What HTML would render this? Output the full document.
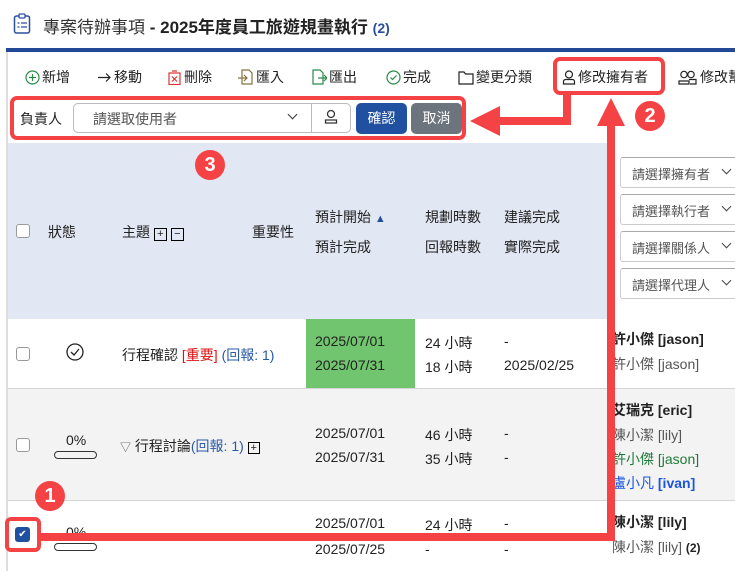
<!DOCTYPE html>
<html><head><meta charset="utf-8"><style>
*{box-sizing:border-box;margin:0;padding:0}
body{width:735px;height:571px;overflow:hidden;background:#fff;font-family:"Liberation Sans","Noto Sans CJK TC",sans-serif;font-size:14px;color:#222;position:relative}
.a{position:absolute;white-space:nowrap}
.cb{position:absolute;width:14px;height:14px;border:1px solid #999;border-radius:3px;background:#fff}
.sel{position:absolute;left:620px;width:125px;height:31px;border:1px solid #ccc;border-top-color:#aaa;border-radius:3px;background:#fff;font-size:13px;color:#555;padding:6px 0 0 11px}
.sel:after{content:"";position:absolute;right:14px;top:8px;width:6px;height:6px;border-right:1.5px solid #444;border-bottom:1.5px solid #444;transform:rotate(45deg)}
.bar{position:absolute;width:43px;height:8px;border:1px solid #333;border-radius:4px}
.red{background:#f54245}
.circ{position:absolute;width:30px;height:30px;border-radius:50%;background:#f54245;color:#fff;font-weight:bold;font-size:20px;text-align:center;line-height:30px}
.tb{top:67px;font-size:14px}
.tb svg{vertical-align:-3px;margin-right:2px}
</style></head><body>
<svg class="a" style="left:13px;top:13px" width="18" height="22" viewBox="0 0 18 22"><rect x="1.5" y="3" width="15" height="17" rx="2" fill="none" stroke="#2a4f9c" stroke-width="1.5"/><rect x="6" y="1" width="6" height="4" rx="1" fill="#fff" stroke="#2a4f9c" stroke-width="1.3"/><path d="M4.5 10h2M8 10h6M4.5 14h2M8 14h6" stroke="#2a4f9c" stroke-width="1.3"/></svg>
<div class="a" style="left:43px;top:13px;font-size:17px;color:#333">專案待辦事項 <b style="color:#222">- 2025年度員工旅遊規畫執行</b> <b style="font-size:14px;color:#2a4f9c">(2)</b></div>
<div class="a" style="left:6px;top:48px;width:729px;height:4px;background:#234a97"></div>
<div class="a" style="left:6px;top:52px;width:2px;height:519px;background:#ddd"></div>
<div class="a tb" style="left:25px"><svg width="15" height="15"><circle cx="7.5" cy="7.5" r="6.5" fill="none" stroke="#2a8a4a" stroke-width="1.2"/><path d="M7.5 4v7M4 7.5h7" stroke="#2a8a4a" stroke-width="1.2"/></svg>新增</div>
<div class="a tb" style="left:97px"><svg width="15" height="15"><path d="M1 7.5h12M9 3.5l4 4-4 4" fill="none" stroke="#222" stroke-width="1.2"/></svg>移動</div>
<div class="a tb" style="left:167px"><svg width="15" height="15"><rect x="2" y="3" width="11" height="11.5" fill="none" stroke="#d33" stroke-width="1.2"/><path d="M5 1h5M5 6.5l5 5M10 6.5l-5 5" stroke="#d33" stroke-width="1.2"/></svg>刪除</div>
<div class="a tb" style="left:238px"><svg width="16" height="16"><path d="M4 1h7l3 3v11H4z" fill="none" stroke="#8a7040" stroke-width="1.2"/><path d="M0 9h9M6 6l3 3-3 3" fill="none" stroke="#8a7040" stroke-width="1.2"/></svg>匯入</div>
<div class="a tb" style="left:311px"><svg width="16" height="16"><path d="M2 1h7l3 3v11H2z" fill="none" stroke="#2a8a4a" stroke-width="1.2"/><path d="M7 9h9M13 6l3 3-3 3" fill="none" stroke="#2a8a4a" stroke-width="1.2"/></svg>匯出</div>
<div class="a tb" style="left:386px"><svg width="15" height="15"><circle cx="7.5" cy="7.5" r="6.5" fill="none" stroke="#2a8a4a" stroke-width="1.2"/><path d="M4.5 7.5l2 2 4-4" fill="none" stroke="#2a8a4a" stroke-width="1.2"/></svg>完成</div>
<div class="a tb" style="left:458px"><svg width="16" height="15"><path d="M1 2h5l1.5 2H15v10H1z" fill="none" stroke="#222" stroke-width="1.2"/></svg>變更分類</div>
<div class="a tb" style="left:562px"><svg width="14" height="15"><circle cx="7" cy="4.5" r="3.5" fill="none" stroke="#222" stroke-width="1.2"/><path d="M1.5 14v-2.5a2 2 0 0 1 2-2h7a2 2 0 0 1 2 2V14z" fill="none" stroke="#222" stroke-width="1.2"/></svg>修改擁有者</div>
<div class="a tb" style="left:678px"><svg width="20" height="15"><circle cx="6" cy="4.5" r="3.2" fill="none" stroke="#222" stroke-width="1.2"/><circle cx="13" cy="4.5" r="3.2" fill="none" stroke="#222" stroke-width="1.2"/><path d="M1 14v-3h10v3zM11 9.5h7V14h-6" fill="none" stroke="#222" stroke-width="1.2"/></svg>修改幫</div>
<div class="a" style="left:553px;top:57px;width:112px;height:38px;border:4px solid #f54245;border-radius:7px"></div>
<div class="a" style="left:8px;top:143px;width:602px;height:176px;background:#e1e7f3"></div>
<div class="a" style="left:8px;top:388px;width:727px;height:113px;background:#f3f3f3;border-top:1px solid #d5d5d5;border-bottom:1px solid #d5d5d5"></div>
<div class="a" style="left:306px;top:319px;width:109px;height:69px;background:#71c56e"></div>
<div class="a" style="left:10px;top:96px;width:456px;height:44px;border:4px solid #f54245;border-radius:7px"></div>
<div class="a" style="left:20px;top:109px">負責人</div>
<div class="a" style="left:73px;top:103px;width:278px;height:30px;border:1px solid #bbb;border-radius:5px;background:#fff"></div>
<div class="a" style="left:311px;top:103px;width:1px;height:30px;background:#bbb"></div>
<div class="a" style="left:93px;top:109px;color:#555">請選取使用者</div>
<div class="a" style="left:289px;top:111px;width:7px;height:7px;border-right:1.5px solid #333;border-bottom:1.5px solid #333;transform:rotate(45deg)"></div>
<svg class="a" style="left:324px;top:109px" width="14" height="16"><circle cx="7" cy="5" r="3.5" fill="none" stroke="#333" stroke-width="1.3"/><path d="M1.5 14v-3h11v3z" fill="none" stroke="#333" stroke-width="1.3"/></svg>
<div class="a" style="left:356px;top:103px;width:51px;height:31px;background:#2150a0;border-radius:5px;color:#fff;text-align:center;line-height:31px">確認</div>
<div class="a" style="left:411px;top:103px;width:51px;height:31px;background:#6c757d;border-radius:5px;color:#fff;text-align:center;line-height:31px">取消</div>
<div class="cb" style="left:16px;top:224px"></div>
<div class="a" style="left:48px;top:222px">狀態</div>
<div class="a" style="left:122px;top:222px">主題 <span style="display:inline-block;width:13px;height:13px;border:1px solid #000;font-size:11px;line-height:11px;text-align:center">+</span> <span style="display:inline-block;width:13px;height:13px;border:1px solid #000;font-size:11px;line-height:10px;text-align:center">−</span></div>
<div class="a" style="left:252px;top:222px">重要性</div>
<div class="a" style="left:315px;top:207px">預計開始 <span style="color:#2150a0;font-size:11px">▲</span></div>
<div class="a" style="left:315px;top:237px">預計完成</div>
<div class="a" style="left:425px;top:207px">規劃時數</div>
<div class="a" style="left:425px;top:237px">回報時數</div>
<div class="a" style="left:504px;top:207px">建議完成</div>
<div class="a" style="left:504px;top:237px">實際完成</div>
<div class="sel" style="top:157px">請選擇擁有者</div>
<div class="sel" style="top:194px">請選擇執行者</div>
<div class="sel" style="top:231px">請選擇關係人</div>
<div class="sel" style="top:268px">請選擇代理人</div>
<div class="cb" style="left:16px;top:347px"></div>
<svg class="a" style="left:66px;top:343px" width="18" height="18"><circle cx="9" cy="9" r="8" fill="none" stroke="#222" stroke-width="1.3"/><path d="M5 9l3 3 5-6" fill="none" stroke="#222" stroke-width="1.3"/></svg>
<div class="a" style="left:122px;top:345px">行程確認 <span style="color:#e01010">[重要]</span> <b style="color:#2a5aa8;font-weight:normal">(回報: 1)</b></div>
<div class="a" style="left:315px;top:333px">2025/07/01</div>
<div class="a" style="left:315px;top:357px">2025/07/31</div>
<div class="a" style="left:425px;top:333px">24 小時</div>
<div class="a" style="left:425px;top:357px">18 小時</div>
<div class="a" style="left:504px;top:333px">-</div>
<div class="a" style="left:504px;top:357px">2025/02/25</div>
<div class="a" style="left:612px;top:329px"><b>許小傑 [jason]</b></div>
<div class="a" style="left:612px;top:354px;color:#555">許小傑 [jason]</div>
<div class="cb" style="left:16px;top:438px"></div>
<div class="a" style="left:66px;top:432px">0%</div>
<div class="bar" style="left:54px;top:451px"></div>
<div class="a" style="left:120px;top:436px"><span style="font-size:11px;color:#555">▽</span> 行程討論<span style="color:#2a5aa8">(回報: 1)</span> <span style="display:inline-block;width:12px;height:12px;border:1px solid #000;font-size:11px;line-height:10px;text-align:center">+</span></div>
<div class="a" style="left:315px;top:425px">2025/07/01</div>
<div class="a" style="left:315px;top:449px">2025/07/31</div>
<div class="a" style="left:425px;top:425px">46 小時</div>
<div class="a" style="left:425px;top:449px">35 小時</div>
<div class="a" style="left:504px;top:425px">-</div>
<div class="a" style="left:504px;top:449px">-</div>
<div class="a" style="left:612px;top:400px"><b>艾瑞克 [eric]</b></div>
<div class="a" style="left:612px;top:425px;color:#555">陳小潔 [lily]</div>
<div class="a" style="left:612px;top:449px;color:#1f7a3a">許小傑 [jason]</div>
<div class="a" style="left:612px;top:473px;color:#1a55e0">盧小凡 <b>[ivan]</b></div>
<div class="a" style="left:66px;top:524px">0%</div>
<div class="bar" style="left:54px;top:543px"></div>
<div class="a" style="left:315px;top:515px">2025/07/01</div>
<div class="a" style="left:315px;top:541px">2025/07/25</div>
<div class="a" style="left:425px;top:515px">24 小時</div>
<div class="a" style="left:425px;top:541px">-</div>
<div class="a" style="left:504px;top:515px">-</div>
<div class="a" style="left:504px;top:541px">-</div>
<div class="a" style="left:612px;top:512px"><b>陳小潔 [lily]</b></div>
<div class="a" style="left:612px;top:537px;color:#555">陳小潔 [lily] <b style="color:#222;font-size:12px">(2)</b></div>
<div class="a red" style="left:35px;top:533px;width:580px;height:8px"></div>
<div class="a red" style="left:607px;top:122px;width:8px;height:419px"></div>
<svg class="a" style="left:596px;top:98px" width="30" height="28"><path d="M15 0L29 28H1z" fill="#f54245"/></svg>
<div class="a red" style="left:563px;top:93px;width:8px;height:32px"></div>
<div class="a red" style="left:495px;top:117px;width:76px;height:8px"></div>
<svg class="a" style="left:470px;top:106px" width="30" height="30"><path d="M0 15L30 0V30z" fill="#f54245"/></svg>
<div class="circ" style="left:635px;top:101px">2</div>
<div class="circ" style="left:195px;top:150px">3</div>
<div class="circ" style="left:35px;top:481px">1</div>
<div class="a" style="left:5px;top:517px;width:36px;height:35px;border:4px solid #f54245;border-radius:6px;background:#fff"></div>
<div class="a" style="left:15px;top:527px;width:15px;height:15px;background:#2150a0;border-radius:3px;color:#fff;font-size:10px;text-align:center;line-height:15px">✔</div>
</body></html>
